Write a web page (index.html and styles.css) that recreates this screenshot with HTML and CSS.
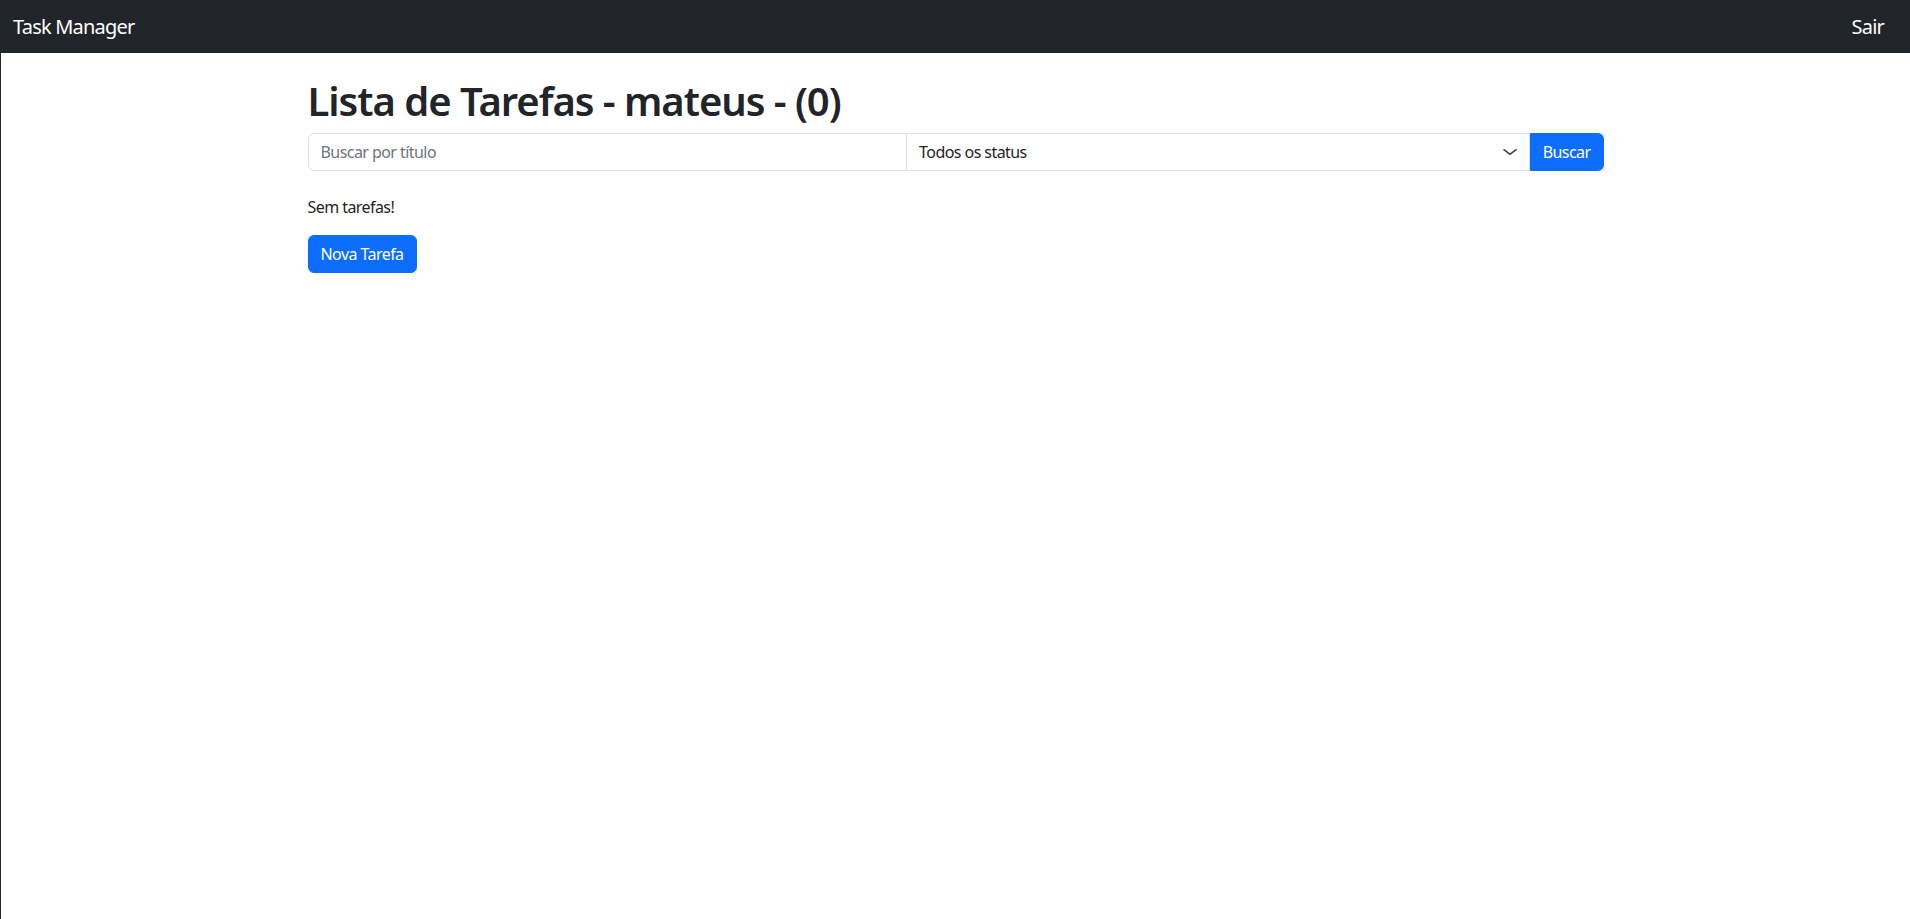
FILE: index.html
```html
<!DOCTYPE html>
<html lang="pt-BR">
<head>
<meta charset="utf-8">
<title>Task Manager</title>
<link rel="stylesheet" href="styles.css">
</head>
<body>
<nav class="navbar">
  <a class="brand" href="#">Task Manager</a>
  <a class="brand" href="#">Sair</a>
</nav>
<main class="container">
  <h1 class="title">Lista de Tarefas - mateus - (0)</h1>
  <form class="search">
    <input class="field input" type="text" placeholder="Buscar por título">
    <div class="select-wrap">
      <select class="field select">
        <option>Todos os status</option>
      </select>
      <svg class="chev" viewBox="0 0 16 16" preserveAspectRatio="none"><path fill="none" stroke="#343a40" stroke-linecap="round" stroke-linejoin="round" stroke-width="1.6" d="m2 5 6 6 6-6"/></svg>
    </div>
    <button class="btn btn-group-end" type="button">Buscar</button>
  </form>
  <p class="empty">Sem tarefas!</p>
  <button class="btn" type="button">Nova Tarefa</button>
</main>
</body>
</html>
```
FILE: styles.css
```css
* { box-sizing: border-box; }
html, body { margin: 0; height: 100%; }
body {
  font-family: "Noto Sans", "Open Sans", sans-serif;
  font-size: 16px;
  line-height: 1.5;
  letter-spacing: -0.035em;
  color: #212529;
  background: #fff;
  border-left: 1px solid #212529;
}
.navbar {
  background: #212529;
  height: 53px;
  display: flex;
  align-items: center;
  justify-content: space-between;
  padding: 0 26px 0 12px;
}
.brand {
  color: #fff;
  text-decoration: none;
  font-size: 20px;
  line-height: 30px;
  letter-spacing: -0.04em;
}
.container {
  width: 1320px;
  margin: 0 auto;
  padding: 24px 12px 0;
}
.title {
  margin: 0 0 8px;
  font-size: 40px;
  font-weight: 600;
  line-height: 1.2;
  letter-spacing: -0.026em;
}
.search {
  display: flex;
  align-items: stretch;
  margin-bottom: 24px;
}
.field {
  height: 38px;
  padding: 6px 12px;
  font: inherit;
  letter-spacing: inherit;
  color: #212529;
  border: 1px solid #dee2e6;
  background: #fff;
  outline: none;
}
.field::placeholder { color: #6c757d; }
.input {
  flex: 1 1 26px;
  min-width: 0;
  border-radius: 6px 0 0 6px;
}
.select-wrap {
  flex: 1 1 50px;
  min-width: 0;
  position: relative;
  display: flex;
  margin-left: -1px;
}
.select {
  width: 100%;
  padding-right: 36px;
  appearance: none;
  -webkit-appearance: none;
  border-radius: 0;
}
.chev {
  position: absolute;
  right: 12px;
  top: 13px;
  width: 16px;
  height: 12px;
  pointer-events: none;
}
.btn {
  font: inherit;
  letter-spacing: inherit;
  color: #fff;
  background: #0d6efd;
  border: 1px solid #0d6efd;
  border-radius: 6px;
  padding: 6px 12px;
  height: 38px;
  cursor: pointer;
}
.btn-group-end { border-radius: 0 6px 6px 0; }
.empty { margin: 0 0 16px; }
```
